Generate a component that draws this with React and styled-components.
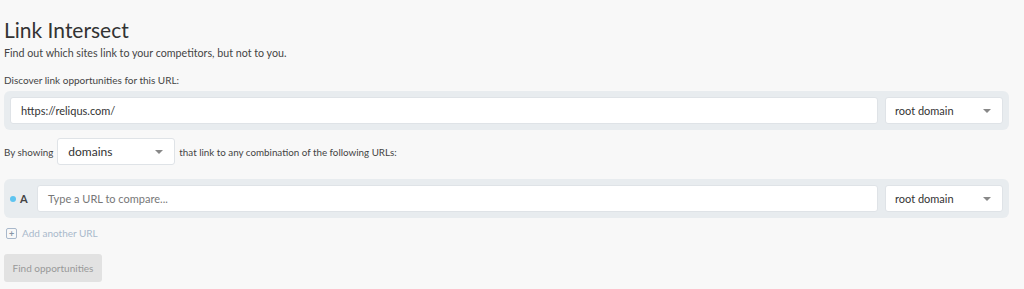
import React from 'react';
import styled, { createGlobalStyle } from 'styled-components';

const GlobalStyle = createGlobalStyle`
  html, body {
    margin: 0;
    padding: 0;
    background: #f8f8f8;
  }
  body {
    font-family: Lato, 'Liberation Sans', sans-serif;
    color: #333;
  }
`;

const Page = styled.div`
  padding: 16px 15px 6px 4px;
`;

const Title = styled.h1`
  margin: 0;
  font-size: 21px;
  font-weight: 400;
  line-height: 28px;
  color: #333;
`;

const Subtitle = styled.p`
  margin: 2px 0 0;
  font-size: 10.7px;
  line-height: 14px;
  color: #444;
`;

const Label = styled.p`
  margin: 13px 0 4px;
  font-size: 10px;
  line-height: 14px;
  color: #444;
`;

const Panel = styled.div`
  display: flex;
  align-items: center;
  gap: 7px;
  padding: 6px;
  background: #e8ecef;
  border-radius: 6px;
`;

const TextInput = styled.div`
  flex: 1;
  height: 27px;
  display: flex;
  align-items: center;
  padding: 0 10px;
  background: #fff;
  border: 1px solid #dfe3e7;
  border-radius: 3px;
  box-sizing: border-box;
  font-size: 11px;
  color: ${(p) => (p.$placeholder ? '#777' : '#333')};
`;

const Select = styled.div`
  width: 118px;
  height: 27px;
  display: flex;
  align-items: center;
  justify-content: space-between;
  padding: 0 11px 0 9px;
  background: #fff;
  border: 1px solid #dfe3e7;
  border-radius: 3px;
  box-sizing: border-box;
  font-size: 11px;
  color: #333;
  flex-shrink: 0;
`;

const Caret = styled.span`
  width: 0;
  height: 0;
  border-left: 4px solid transparent;
  border-right: 4px solid transparent;
  border-top: 4px solid #888;
`;

const ShowRow = styled.div`
  display: flex;
  align-items: center;
  gap: 4px;
  margin: 8px 0 14px;
  font-size: 9.8px;
  color: #444;
`;

const ShowSelect = styled(Select)`
  font-size: 12px;
  padding-left: 10px;
`;

const Marker = styled.div`
  display: flex;
  align-items: center;
  gap: 4px;
  width: 20px;
  font-size: 11px;
  font-weight: 700;
  color: #444;
`;

const Dot = styled.span`
  width: 6px;
  height: 6px;
  border-radius: 50%;
  background: #5ec4f0;
`;

const AddLink = styled.div`
  display: flex;
  align-items: center;
  gap: 5px;
  margin: 9px 0 0 2px;
  font-size: 10px;
  color: #a9b8cb;
`;

const PlusBox = styled.span`
  width: 9px;
  height: 9px;
  border: 1px solid #a9b8cb;
  border-radius: 2px;
  display: flex;
  align-items: center;
  justify-content: center;
  font-size: 9px;
  line-height: 1;
  font-weight: 700;
  color: #8794a5;
`;

const Button = styled.button`
  margin-top: 15px;
  width: 98px;
  height: 28px;
  border: none;
  border-radius: 3px;
  background: #e2e2e2;
  color: #999;
  font-family: inherit;
  font-size: 10px;
`;

export default function App() {
  return (
    <>
      <GlobalStyle />
      <Page>
        <Title>Link Intersect</Title>
        <Subtitle>Find out which sites link to your competitors, but not to you.</Subtitle>
        <Label>Discover link opportunities for this URL:</Label>
        <Panel>
          <TextInput>https://reliqus.com/</TextInput>
          <Select>
            root domain
            <Caret />
          </Select>
        </Panel>
        <ShowRow>
          By showing
          <ShowSelect>
            domains
            <Caret />
          </ShowSelect>
          that link to any combination of the following URLs:
        </ShowRow>
        <Panel>
          <Marker>
            <Dot />A
          </Marker>
          <TextInput $placeholder>Type a URL to compare...</TextInput>
          <Select>
            root domain
            <Caret />
          </Select>
        </Panel>
        <AddLink>
          <PlusBox>+</PlusBox>
          Add another URL
        </AddLink>
        <Button>Find opportunities</Button>
      </Page>
    </>
  );
}
